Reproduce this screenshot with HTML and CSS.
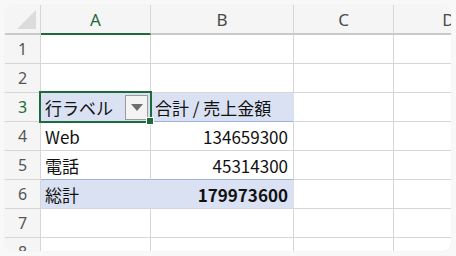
FILE: index.html
```html
<!DOCTYPE html>
<html lang="ja">
<head>
<meta charset="utf-8">
<link rel="stylesheet" href="styles.css">
</head>
<body>
<div class="sheet">
  <div class="corner"><span class="tri"></span></div>
  <div class="colh active">A</div>
  <div class="colh">B</div>
  <div class="colh">C</div>
  <div class="colh">D</div>

  <div class="rowh">1</div><div class="cell"></div><div class="cell"></div><div class="cell"></div><div class="cell"></div>
  <div class="rowh">2</div><div class="cell"></div><div class="cell"></div><div class="cell"></div><div class="cell"></div>

  <div class="rowh active">3</div>
  <div class="cell pv head sel">
    <span class="txt">行ラベル</span>
    <span class="dd"><span class="ddtri"></span></span>
    <span class="selbox"></span>
    <span class="handle"></span>
  </div>
  <div class="cell pv head">合計 / 売上金額</div>
  <div class="cell"></div><div class="cell"></div>

  <div class="rowh">4</div><div class="cell">Web</div><div class="cell num">134659300</div><div class="cell"></div><div class="cell"></div>
  <div class="rowh">5</div><div class="cell">電話</div><div class="cell num">45314300</div><div class="cell"></div><div class="cell"></div>
  <div class="rowh">6</div><div class="cell pv total">総計</div><div class="cell pv total num bold">179973600</div><div class="cell"></div><div class="cell"></div>
  <div class="rowh">7</div><div class="cell"></div><div class="cell"></div><div class="cell"></div><div class="cell"></div>
  <div class="rowh">8</div><div class="cell"></div><div class="cell"></div><div class="cell"></div><div class="cell"></div>
</div>
</body>
</html>
```

FILE: styles.css
```css
html, body {
  margin: 0;
  padding: 0;
  background: #f8f8f8;
}
body {
  width: 456px;
  height: 256px;
  overflow: hidden;
  font-family: "Noto Sans CJK JP", "Noto Sans", sans-serif;
}
.sheet {
  margin: 5px;
  width: 446px;
  height: 246px;
  background: #fff;
  border-radius: 8px;
  overflow: hidden;
  display: grid;
  grid-template-columns: 36px 110px 143px 100px 110px;
  grid-template-rows: 30px repeat(8, 29px);
  box-shadow: 0 0 2px rgba(0,0,0,0.06);
}
.corner, .colh, .rowh {
  background: #f5f5f5;
  box-sizing: border-box;
  border-right: 1px solid #d6d6d6;
  border-bottom: 1px solid #d6d6d6;
  color: #555;
}
.corner {
  position: relative;
  border-bottom: 2px solid #c9c9c9;
}
.tri {
  position: absolute;
  right: 4px;
  bottom: 4px;
  width: 0;
  height: 0;
  border-left: 19px solid transparent;
  border-bottom: 19px solid #dcdcdc;
}
.colh {
  display: flex;
  align-items: center;
  justify-content: center;
  font-size: 17px;
  border-bottom: 2px solid #c9c9c9;
  padding-top: 1px;
  font-family: "Noto Sans", sans-serif;
  color: #4a4a4a;
}
.colh.active {
  color: #1d6b3a;
  border-bottom: 2px solid #1d6b3a;
}
.rowh {
  display: flex;
  align-items: center;
  justify-content: center;
  font-size: 16px;
  font-family: "Noto Sans", sans-serif;
  color: #555;
}
.rowh.active {
  color: #1d6b3a;
}
.cell {
  box-sizing: border-box;
  border-right: 1px solid #d6d6d6;
  border-bottom: 1px solid #d6d6d6;
  display: flex;
  align-items: center;
  padding: 0 4px;
  font-size: 17px;
  color: #111;
  white-space: nowrap;
}
.num {
  justify-content: flex-end;
  padding-right: 5px;
}
.bold {
  font-weight: bold;
}
.pv {
  background: #d9e1f2;
  border-right-color: #d9e1f2;
}
.pv.head {
  border-bottom: 1px solid #9bb3de;
}
.pv.total {
  border-top: 1px solid #9bb3de;
  margin-top: -1px;
}
.sel {
  position: relative;
}
.txt {
  flex: 1;
}
.dd {
  box-sizing: border-box;
  width: 23px;
  height: 25px;
  border: 1px solid #9a9a9a;
  background: #f3f3f3;
  display: flex;
  align-items: center;
  justify-content: center;
  margin-right: -2px;
}
.ddtri {
  width: 0;
  height: 0;
  border-left: 6px solid transparent;
  border-right: 6px solid transparent;
  border-top: 7px solid #6e6e6e;
}
.selbox {
  position: absolute;
  left: -2px;
  top: -2px;
  right: -2px;
  bottom: -2px;
  border: 2px solid #1d6b3a;
  pointer-events: none;
}
.handle {
  position: absolute;
  right: -4px;
  bottom: -4px;
  width: 6px;
  height: 6px;
  background: #1d6b3a;
  border: 1px solid #fff;
  z-index: 2;
}
```
